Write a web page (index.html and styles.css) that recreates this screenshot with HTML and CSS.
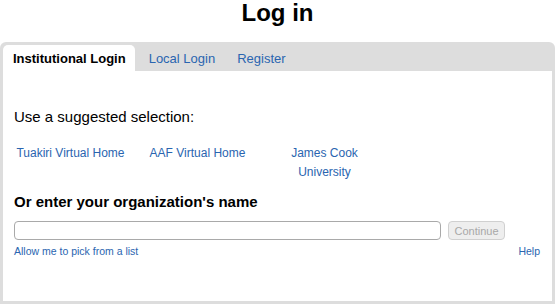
FILE: index.html
```html
<!DOCTYPE html>
<html lang="en">
<head>
    <meta charset="UTF-8">
    <title>Log in</title>
    <link rel="stylesheet" href="styles.css">
</head>
<body>
    <h1 class="title">Log in</h1>

    <div class="panel">
        <ul class="tabs">
            <li class="tab active">Institutional Login</li>
            <li class="tab"><a href="#">Local Login</a></li>
            <li class="tab"><a href="#">Register</a></li>
        </ul>

        <div class="content">
            <div class="lead">Use a suggested selection:</div>

            <div class="suggested">
                <a class="idp" href="#">Tuakiri Virtual Home</a>
                <a class="idp" href="#">AAF Virtual Home</a>
                <a class="idp" href="#">James Cook University</a>
            </div>

            <div class="heading">Or enter your organization's name</div>

            <form class="search">
                <input class="search-input" type="text">
                <button class="btn-continue" type="submit" disabled>Continue</button>
            </form>

            <div class="search-links">
                <a href="#">Allow me to pick from a list</a>
                <a href="#">Help</a>
            </div>
        </div>
    </div>
</body>
</html>
```

FILE: styles.css
```css
* {
    margin: 0;
    padding: 0;
    box-sizing: border-box;
}

body {
    font-family: "Liberation Sans", Arial, sans-serif;
    color: #000;
    background: #fff;
}

a {
    color: #2a65b0;
    text-decoration: none;
}

.title {
    font-size: 24px;
    font-weight: bold;
    text-align: center;
    line-height: 26px;
    height: 42px;
}

.panel {
    background: #dddddd;
    border-radius: 6px 6px 0 0;
    padding: 3px;
}

.tabs {
    list-style: none;
    display: flex;
    height: 26px;
}

.tab {
    font-size: 13px;
    line-height: 28px;
    padding: 0 9px 0 10px;
    margin-right: 3px;
    border-radius: 5px 5px 0 0;
}

.tab:first-child {
    margin-right: 4px;
}

.tab.active {
    background: #fff;
    font-weight: bold;
}

.content {
    background: #fff;
    height: 230px;
    padding: 37px 12px 0 11px;
}

.lead {
    font-size: 15px;
    line-height: 18px;
}

.suggested {
    display: grid;
    grid-template-columns: repeat(3, 127px);
    margin: 18px 0 0 -7px;
}

.idp {
    font-size: 12px;
    line-height: 19px;
    text-align: center;
    padding: 0 7px;
}

.heading {
    font-size: 15px;
    font-weight: bold;
    line-height: 18px;
    margin-top: 11px;
}

.search {
    display: flex;
    gap: 7px;
    margin-top: 10px;
}

.search-input {
    width: 427px;
    height: 19px;
    border: 1px solid #a9a9a9;
    border-radius: 4px;
}

.btn-continue {
    width: 57px;
    height: 19px;
    font-family: "Liberation Sans", Arial, sans-serif;
    font-size: 11px;
    color: #a8a8a8;
    background: #eeeeee;
    border: 1px solid #d0d0d0;
    border-radius: 4px;
}

.search-links {
    display: flex;
    justify-content: space-between;
    font-size: 10.5px;
    line-height: 13px;
    margin-top: 5px;
}
```
